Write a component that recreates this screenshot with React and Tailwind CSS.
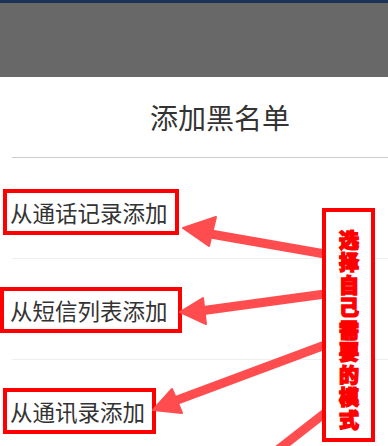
import React from "react";

const cjk = { fontFamily: '"Noto Sans CJK SC", "Noto Sans", sans-serif' };

function Box({ children, className }) {
  return (
    <div
      className={
        "border-[4px] border-[#ff0000] h-[46px] flex items-center text-[22.5px] text-[#333333] leading-none " +
        className
      }
    >
      {children}
    </div>
  );
}

export default function App() {
  return (
    <div className="relative w-[388px] h-[446px] overflow-hidden bg-white" style={cjk}>
      <div className="h-[3px] bg-[#1c3358]" />
      <div className="h-[74px] bg-[#686868]" />
      <div className="h-[80px] flex items-center justify-center pl-[52px] text-[28px] text-[#333333]">
        添加黑名单
      </div>
      <div className="ml-3 h-px bg-[#cccccc]" />
      <div className="h-[100px] pt-[31px] pl-[3px]">
        <Box className="w-[176px] pl-[3px]">从通话记录添加</Box>
      </div>
      <div className="ml-3 h-px bg-[#eeeeee]" />
      <div className="h-[100px] pt-[28px]">
        <Box className="w-[182px] pl-[6px]">从短信列表添加</Box>
      </div>
      <div className="ml-3 h-px bg-[#eeeeee]" />
      <div className="pt-[28px] pl-[3px]">
        <Box className="w-[153px] pl-[3px]">从通讯录添加</Box>
      </div>

      <svg className="absolute left-0 top-0" width="388" height="446" viewBox="0 0 388 446">
        <g fill="#ff4d4f" stroke="#ff4d4f" strokeLinejoin="round">
          <line x1="205" y1="233" x2="325" y2="254" strokeWidth="9" />
          <polygon points="183,228 216,217 209,246" strokeWidth="2" />
          <line x1="200" y1="311" x2="325" y2="294" strokeWidth="9" />
          <polygon points="180,312 203,298 206,324" strokeWidth="2" />
          <line x1="172" y1="402" x2="325" y2="345" strokeWidth="9" />
          <polygon points="153,410 172,389 182,413" strokeWidth="2" />
          <line x1="275" y1="452" x2="325" y2="413" strokeWidth="9" />
        </g>
      </svg>

      <div className="absolute left-[322px] top-[208px] w-[53px] h-[234px] border-[4px] border-[#ff0000] bg-white flex justify-center pt-[18px]">
        <span
          className="[writing-mode:vertical-rl] text-[20px] leading-[20px] tracking-[2.5px] font-black text-[#ff0000]"
          style={{ WebkitTextStroke: "1.4px #ff0000" }}
        >
          选择自己需要的模式
        </span>
      </div>
    </div>
  );
}
